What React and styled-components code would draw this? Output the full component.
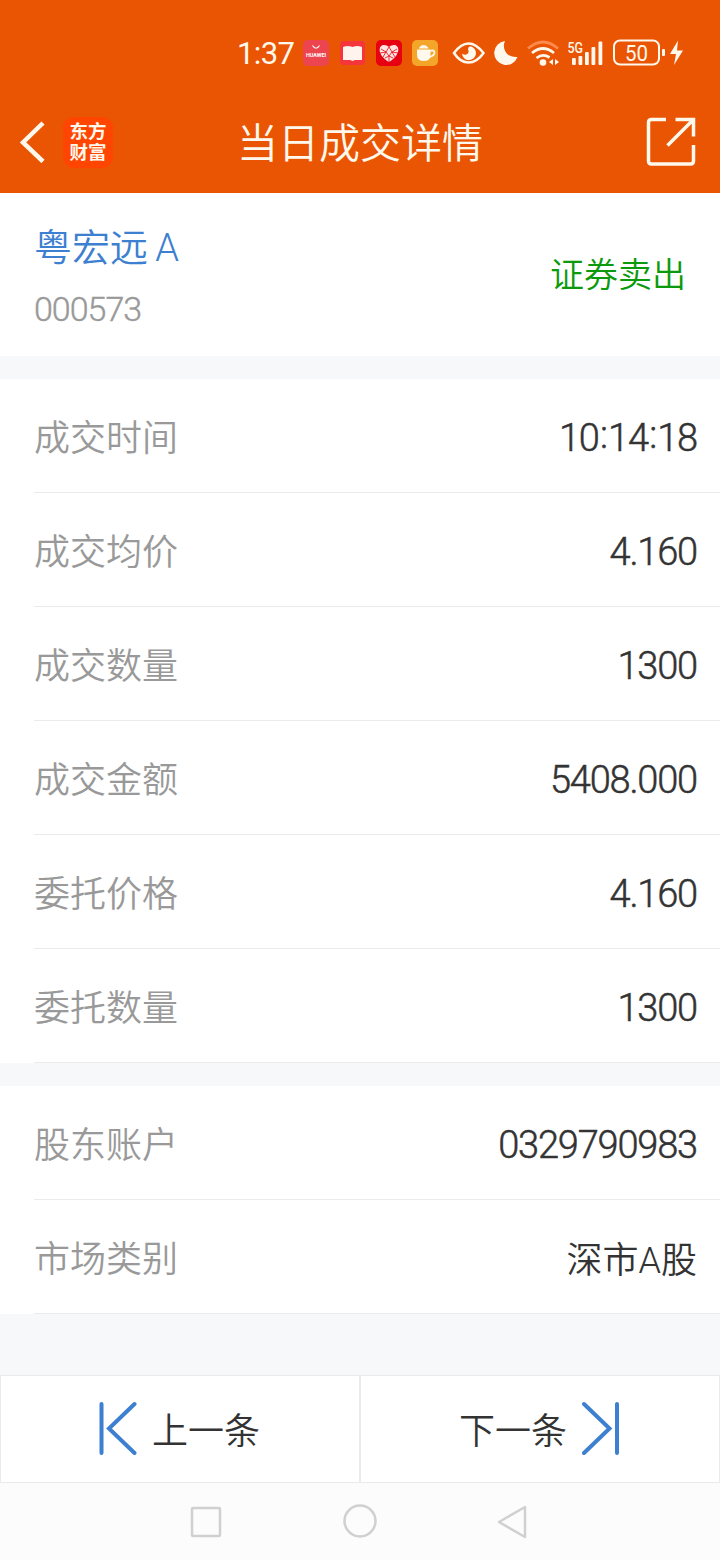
import React from "react";
import styled, { createGlobalStyle } from "styled-components";

const GlobalStyle = createGlobalStyle`
  * {
    box-sizing: border-box;
  }

  body {
    margin: 0;
    background: #f6f8fa;
    font-family: Roboto, "Noto Sans CJK SC", sans-serif;
    font-weight: 350;
    color: #333;
  }
`;

const Screen = styled.div`
  display: flex;
  flex-direction: column;
  width: 720px;
  height: 1560px;
  overflow: hidden;
`;

const Header = styled.header`
  height: 193px;
  background: #ea5504;
  color: #fff8ec;
`;

const StatusBar = styled.div`
  display: flex;
  align-items: center;
  height: 105px;
  padding-left: 237px;
`;

const Clock = styled.span`
  width: 66px;
  padding-top: 2px;
  font-size: 31px;
  font-weight: 400;
  line-height: 34px;
  letter-spacing: -0.6px;
`;

const StatusIcon = styled.svg`
  flex: none;
  display: block;
  overflow: visible;
  margin-right: ${({ gap }) => gap || 0}px;
`;

const TitleBar = styled.div`
  display: grid;
  grid-template-columns: 160px 1fr 160px;
  align-items: center;
  height: 74px;
`;

const TitleLeft = styled.div`
  display: flex;
  align-items: center;
  padding-left: 18px;
`;

const Logo = styled.div`
  width: 50px;
  height: 51px;
  margin-left: 17px;
  padding-top: 5px;
  border-radius: 11px;
  background: #ff4500;
  font-size: 18.5px;
  font-weight: 700;
  line-height: 21px;
  text-align: center;
`;

const Title = styled.h1`
  margin: 0;
  padding-top: 4px;
  font-size: 41px;
  font-weight: 350;
  line-height: 60px;
  text-align: center;
`;

const TitleRight = styled.div`
  display: flex;
  justify-content: flex-end;
  padding-right: 24px;
`;

const Stock = styled.section`
  display: flex;
  align-items: center;
  justify-content: space-between;
  height: 163px;
  padding: 1px 34px 0 34px;
  background: #fff;
`;

const StockInfo = styled.div`
  padding-top: 7px;
`;

const StockName = styled.div`
  font-size: 38px;
  line-height: 56px;
  word-spacing: -2px;
  color: #3d7fd0;
`;

const StockCode = styled.div`
  margin-top: 5px;
  font-size: 34px;
  line-height: 56px;
  letter-spacing: -1px;
  color: #999;
  -webkit-text-stroke: 0.4px currentColor;
`;

const Side = styled.div`
  font-size: 34px;
  line-height: 50px;
  color: #0c9a0c;
`;

const Group = styled.section`
  margin-top: 23px;
  background: #fff;
`;

const Row = styled.div`
  display: flex;
  align-items: center;
  justify-content: space-between;
  height: 114px;
  padding: 0 23px 0 34px;
  background: linear-gradient(#ebebeb, #ebebeb) 34px 100% / 100% 1px no-repeat;
`;

const Label = styled.span`
  padding-bottom: 2px;
  font-size: 36px;
  color: #999;
`;

const Value = styled.span`
  padding-top: 3px;
  font-size: 38px;
  letter-spacing: -1.2px;
  -webkit-text-stroke: 0.5px currentColor;

  &:lang(zh) {
    padding: 0;
    font-size: 36px;
    letter-spacing: 0;
    -webkit-text-stroke: 0;
  }
`;

const Colon = styled.span`
  position: relative;
  top: -3px;
  padding: 0 1.3px;
`;

const Pager = styled.nav`
  display: grid;
  grid-template-columns: 360px 1fr;
  height: 108px;
  margin-top: 61px;
  border: 1px solid #ebebeb;
  background: #fff;
`;

const PagerButton = styled.button`
  display: flex;
  align-items: center;
  justify-content: center;
  gap: 15px;
  padding: 0 1px 2px 0;
  border: 0;
  border-right: ${({ divided }) => (divided ? "2px solid #ebebeb" : "none")};
  background: none;
  font: inherit;
  font-size: 36px;
  color: #333;
`;

const SystemNav = styled.div`
  flex: 1;
  display: flex;
  align-items: center;
  padding-left: 190px;
  background: #fcfcfc;
`;

const details = [
  ["成交时间", "10:14:18"],
  ["成交均价", "4.160"],
  ["成交数量", "1300"],
  ["成交金额", "5408.000"],
  ["委托价格", "4.160"],
  ["委托数量", "1300"]
];

const account = [
  ["股东账户", "0329790983"],
  ["市场类别", "深市A股", "zh"]
];

const StatusIcons = () => (
  <>
    <StatusIcon width="26" height="26" gap={11} viewBox="0 0 26 26">
      <rect width="26" height="26" rx="5" fill="#ed4550" />
      <path d="M9.500 5.500q3.500 5.500 7 0" fill="none" stroke="#fff" strokeWidth="1.2" />
      <text x="13" y="17" textAnchor="middle" fontSize="5.4" fontWeight="700" textLength="20" fill="#fff">
        HUAWEI
      </text>
    </StatusIcon>
    <StatusIcon width="25" height="26" gap={11} viewBox="0 0 25 26">
      <rect y="1" width="25" height="24" rx="4" fill="#f5343c" />
      <path d="M3 7q5-2 9.500 0 4.500-2 9.500 0v13h-7l-2.500 1-2.500-1H3z" fill="#fff3ee" />
    </StatusIcon>
    <StatusIcon width="26" height="26" gap={10} viewBox="0 0 26 26">
      <rect width="26" height="26" rx="5" fill="#e60012" />
      <path d="M13 22C1 15 2 5 8 5q3 0 5 2 2-2 5-2c6 0 7 10-5 17z" fill="#ffe4df" />
      <path
        d="M5 9l5 3 3-5 3 5 5-3M4 13l6-1 3 4 3-4 6 1M7 17l3-5M19 17l-3-5M13 16v6M9 18l4-2 4 2"
        fill="none"
        stroke="#e60012"
        strokeWidth="0.8"
      />
    </StatusIcon>
    <StatusIcon width="26" height="26" gap={14} viewBox="0 0 26 26">
      <rect width="26" height="26" rx="5" fill="#f3a62a" />
      <path d="M5 9.500h13.500V15q0 6-6.700 6T5 15z" fill="#fff8ec" />
      <path d="M7 8.500q1-3.500 4.500-3.500T16.500 8.500" fill="#fff8ec" />
      <path d="M18 11q4.500-1.500 4.500 1.500T17.500 17" fill="none" stroke="#fff8ec" strokeWidth="1.8" />
    </StatusIcon>
    <StatusIcon width="34" height="26" gap={8} viewBox="0 0 34 26" fill="none" stroke="currentColor">
      <path d="M2 13Q9 3.500 16.500 3.500T31.500 13Q25 22.500 16.500 22.500T2 13z" strokeWidth="2.5" />
      <path d="M18 6.200a7 7 0 1 1-8 7.300q3 2.200 5.300.5 2.200-2 .7-4.500-.5-2 2-3.300z" fill="currentColor" stroke="none" />
    </StatusIcon>
    <StatusIcon width="25" height="26" gap={8} viewBox="0 0 25 26">
      <path d="M11 1C8 7 11 18 23.500 17A12 12 0 1 1 11 1z" fill="currentColor" />
    </StatusIcon>
    <StatusIcon width="33" height="28" gap={7} viewBox="0 0 33 28" fill="none" stroke="currentColor" strokeWidth="2.8">
      <path d="M1 9.500Q16 -3.500 31 9.500" stroke="#ff8a4d" />
      <path d="M5 14Q16 5 27 14M9.500 19Q16 14 22.500 18.500" />
      <circle cx="16" cy="23.500" r="3.300" fill="currentColor" stroke="none" />
      <path d="M26 20v6l-4-3zM28 20v6l4-3z" fill="currentColor" stroke="none" />
    </StatusIcon>
    <StatusIcon width="36" height="28" gap={10} viewBox="0 0 36 28" fill="currentColor">
      <text x="0.5" y="14" fontSize="15" fontWeight="500" textLength="15.5" lengthAdjust="spacingAndGlyphs">
        5G
      </text>
      <rect x="5" y="19" width="3.8" height="7" rx="1" />
      <rect x="11.500" y="17" width="3.8" height="9" rx="1" />
      <rect x="18" y="13" width="3.8" height="13" rx="1" />
      <rect x="24.500" y="8" width="3.8" height="18" rx="1" />
      <rect x="31.500" y="2.500" width="3.8" height="23.500" rx="1" />
    </StatusIcon>
    <StatusIcon width="71" height="28" viewBox="0 0 71 28" fill="currentColor">
      <rect x="1" y="1.500" width="45" height="24" rx="6" fill="none" stroke="currentColor" strokeWidth="2" />
      <text x="23.500" y="21.500" textAnchor="middle" fontSize="22.5" fontWeight="400" textLength="23" lengthAdjust="spacingAndGlyphs">
        50
      </text>
      <rect x="49" y="10" width="3" height="7" rx="1" />
      <path d="M65 1.500L57 15h6L61 26l9-14.500h-6z" />
    </StatusIcon>
  </>
);

const renderValue = value =>
  value
    .split(/(:)/)
    .map((part, i) => (part === ":" ? <Colon key={i}>:</Colon> : part));

const Rows = ({ items }) => (
  <Group>
    {items.map(([label, value, lang]) => (
      <Row key={label}>
        <Label>{label}</Label>
        <Value lang={lang}>{renderValue(value)}</Value>
      </Row>
    ))}
  </Group>
);

const App = () => (
  <Screen>
    <GlobalStyle />
    <Header>
      <StatusBar>
        <Clock>1:37</Clock>
        <StatusIcons />
      </StatusBar>
      <TitleBar>
        <TitleLeft>
          <svg width="28" height="42" viewBox="0 0 28 42" fill="none" stroke="currentColor" strokeWidth="4.5">
            <path d="M25 2L5 21.500l20 19" />
          </svg>
          <Logo>
            东方
            <br />
            财富
          </Logo>
        </TitleLeft>
        <Title>当日成交详情</Title>
        <TitleRight>
          <svg width="50" height="50" viewBox="0 0 50 50" fill="none" stroke="currentColor" strokeWidth="3.5">
            <path d="M20 2.500H5.500q-3 0-3 3V44q0 3 3 3h39q3 0 3-3V28" />
            <path d="M29.500 2.500H47.500V19.500M47 3L21.500 28.500" />
          </svg>
        </TitleRight>
      </TitleBar>
    </Header>

    <Stock>
      <StockInfo>
        <StockName>粤宏远 A</StockName>
        <StockCode>000573</StockCode>
      </StockInfo>
      <Side>证券卖出</Side>
    </Stock>

    <Rows items={details} />
    <Rows items={account} />

    <Pager>
      <PagerButton divided>
        <svg width="38" height="54" viewBox="0 0 38 54" fill="none" stroke="#3d7fd0" strokeWidth="4" strokeLinecap="round">
          <path d="M2.500 3v49M35.500 3L10 27.500 35.500 52" />
        </svg>
        上一条
      </PagerButton>
      <PagerButton>
        下一条
        <svg width="38" height="54" viewBox="0 0 38 54" fill="none" stroke="#3d7fd0" strokeWidth="4" strokeLinecap="round">
          <path d="M35 3v49M2 3l25.500 24.500L2 52" />
        </svg>
      </PagerButton>
    </Pager>

    <SystemNav>
      <svg width="338" height="36" viewBox="0 0 338 36" fill="none" stroke="#d0d0d0" strokeWidth="2.5" strokeLinejoin="round">
        <rect x="2" y="4" width="28" height="28" rx="1" />
        <circle cx="170" cy="17" r="15.500" />
        <path d="M335 3v30L309 18z" />
      </svg>
    </SystemNav>
  </Screen>
);

export default App;
